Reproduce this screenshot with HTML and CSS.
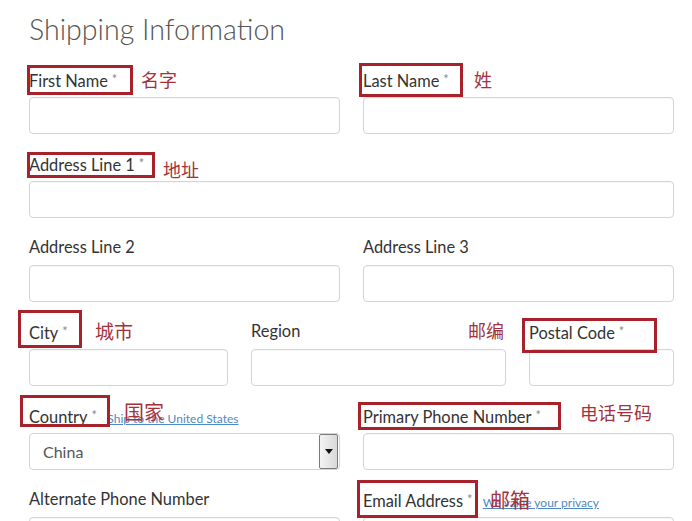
FILE: index.html
```html
<!DOCTYPE html>
<html lang="en">
<head>
    <meta charset="UTF-8">
    <meta name="viewport" content="width=device-width, initial-scale=1.0">
    <title>Shipping Information</title>
    <link rel="stylesheet" href="styles.css">
</head>
<body>
<div class="shipping">
    <h1 class="title">Shipping Information</h1>

    <div class="row two">
        <div class="field">
            <div class="label">First Name<span class="req">*</span>
                <span class="mark mark-first"></span><span class="cn cn-first">名字</span>
            </div>
            <input class="input" type="text">
        </div>
        <div class="field">
            <div class="label">Last Name<span class="req">*</span>
                <span class="mark mark-last"></span><span class="cn cn-last">姓</span>
            </div>
            <input class="input" type="text">
        </div>
    </div>

    <div class="row">
        <div class="field">
            <div class="label">Address Line 1<span class="req">*</span>
                <span class="mark mark-addr"></span><span class="cn cn-addr">地址</span>
            </div>
            <input class="input" type="text">
        </div>
    </div>

    <div class="row two">
        <div class="field">
            <div class="label">Address Line 2</div>
            <input class="input" type="text">
        </div>
        <div class="field">
            <div class="label">Address Line 3</div>
            <input class="input" type="text">
        </div>
    </div>

    <div class="row three">
        <div class="field">
            <div class="label">City<span class="req">*</span>
                <span class="mark mark-city"></span><span class="cn cn-city">城市</span>
            </div>
            <input class="input" type="text">
        </div>
        <div class="field">
            <div class="label">Region<span class="cn cn-zip">邮编</span></div>
            <input class="input" type="text">
        </div>
        <div class="field">
            <div class="label">Postal Code<span class="req">*</span>
                <span class="mark mark-postal"></span>
            </div>
            <input class="input" type="text">
        </div>
    </div>

    <div class="row two">
        <div class="field">
            <div class="label">Country<span class="req">*</span>
                <a class="hint" href="#">Ship to the United States</a>
                <span class="mark mark-country"></span><span class="cn cn-country">国家</span>
            </div>
            <div class="select">
                <span class="select-value">China</span>
                <span class="select-arrow"></span>
            </div>
        </div>
        <div class="field">
            <div class="label">Primary Phone Number<span class="req">*</span>
                <span class="mark mark-phone"></span><span class="cn cn-phone">电话号码</span>
            </div>
            <input class="input" type="text">
        </div>
    </div>

    <div class="row two">
        <div class="field">
            <div class="label">Alternate Phone Number</div>
            <input class="input" type="text">
        </div>
        <div class="field">
            <div class="label">Email Address<span class="req">*</span>
                <a class="hint" href="#">We value your privacy</a>
                <span class="mark mark-email"></span><span class="cn cn-email">邮箱</span>
            </div>
            <input class="input" type="text">
        </div>
    </div>
</div>
</body>
</html>
```

FILE: styles.css
```css
html, body {
    margin: 0;
    background-color: #fff;
    overflow: hidden;
}

body {
    font-family: 'Lato', 'Noto Sans CJK SC', sans-serif;
    color: #333;
}

.shipping {
    width: 645px;
    padding: 12px 0 0 29px;
}

.title {
    margin: 0 0 21px;
    font-size: 28.6px;
    line-height: 34px;
    font-weight: 300;
    color: #555;
}

.row {
    margin-bottom: 17px;
}

.row.two {
    display: grid;
    grid-template-columns: 1fr 1fr;
    column-gap: 23px;
}

.row.three {
    display: grid;
    grid-template-columns: 199px 255px 1fr;
    column-gap: 23px;
}

.label {
    position: relative;
    height: 24px;
    margin-bottom: 6px;
    font-size: 16.4px;
    line-height: 24px;
    white-space: nowrap;
}

.req {
    margin-left: 4px;
    font-size: 13px;
    color: #8c8c8c;
    vertical-align: 3px;
}

.hint {
    margin-left: 6px;
    font-size: 12px;
    color: #4f88c2;
    text-decoration: underline;
}

.input {
    display: block;
    width: 100%;
    height: 37px;
    box-sizing: border-box;
    border: 1px solid #d4d4d4;
    border-radius: 4px;
    background-color: #fff;
    box-shadow: inset 0 1px 1px rgba(0, 0, 0, 0.03);
}

.select {
    display: flex;
    align-items: center;
    height: 37px;
    box-sizing: border-box;
    border: 1px solid #d4d4d4;
    border-radius: 4px;
    background-color: #fff;
    padding-left: 13px;
}

.select-value {
    flex: 1;
    font-size: 16px;
    color: #555;
}

.select-arrow {
    width: 17px;
    height: 33px;
    margin-right: 1px;
    border: 1px solid #7a7a7a;
    border-radius: 2px;
    background: linear-gradient(to right, #f4f4f4, #d9d9d9);
    display: flex;
    justify-content: center;
    align-items: center;
}

.select-arrow::after {
    content: '';
    border-left: 4px solid transparent;
    border-right: 4px solid transparent;
    border-top: 5px solid #111;
}

/* annotation layer: red boxes and chinese notes */
.mark {
    position: absolute;
    box-sizing: border-box;
    border: 3px solid #a8222b;
}

.mark-first { left: -2px; top: -2px; width: 106px; height: 30px; }
.mark-last { left: -4px; top: -4px; width: 104px; height: 34px; }
.mark-addr { left: -2px; top: 1px; width: 128px; height: 26px; }
.mark-city { left: -11px; top: -9px; width: 64px; height: 38px; }
.mark-postal { left: -7px; top: -1px; width: 135px; height: 35px; }
.mark-country { left: -9px; top: -8px; width: 90px; height: 32px; }
.mark-phone { left: -5px; top: -1px; width: 203px; height: 28px; }
.mark-email { left: -6px; top: -7px; width: 121px; height: 38px; }

.cn {
    position: absolute;
    font-family: 'Noto Sans CJK SC', sans-serif;
    font-size: 18px;
    line-height: 24px;
    color: #a3323d;
}

.cn-first { left: 112px; top: 0; }
.cn-last { left: 111px; top: 0; }
.cn-addr { left: 134px; top: 6px; }
.cn-city { left: 66px; top: 0; font-size: 19px; }
.cn-zip { left: 217px; top: -1px; }
.cn-country { left: 95px; top: -3px; font-size: 20px; }
.cn-phone { left: 217px; top: -3px; }
.cn-email { left: 127px; top: 1px; font-size: 20px; }
```
